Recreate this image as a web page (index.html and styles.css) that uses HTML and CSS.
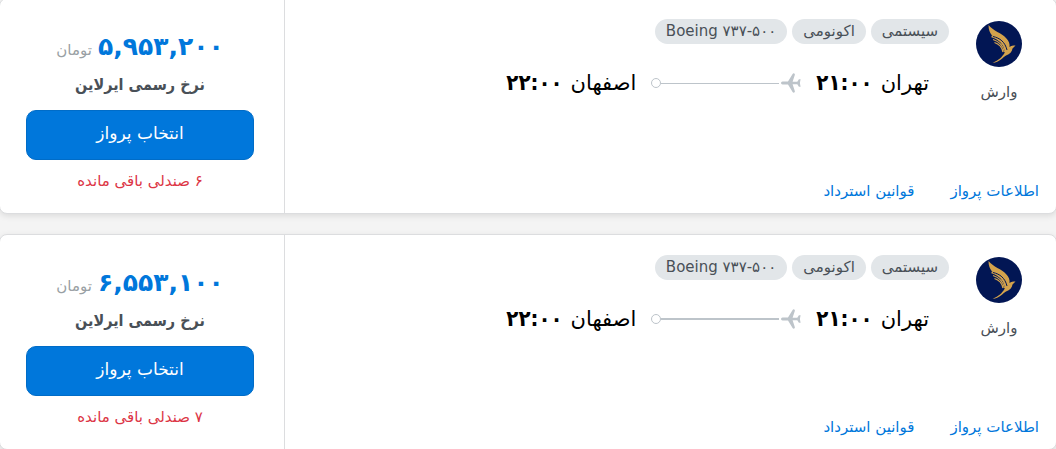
FILE: index.html
```html
<!DOCTYPE html>
<html lang="fa" dir="rtl">
<head>
    <meta charset="UTF-8">
    <meta name="viewport" content="width=device-width, initial-scale=1.0">
    <title>بلیط هواپیما تهران اصفهان</title>
    <link rel="stylesheet" href="styles.css">
</head>
<body>
    <!-- shared icons -->
    <svg class="sprite" aria-hidden="true">
        <symbol id="varesh" viewBox="0 0 46 46">
            <circle cx="23" cy="23" r="23" fill="#021654"/>
            <path fill="#d3a24c" d="M12.500 4C17 10 26 12 30 17C33 20 34 23 33.500 26C35 24.500 37 24.500 39.500 24.500L36.500 27.500C36 31 34 33 30 34.500C26 37 24 41 16.500 42C23 39 26 36 28.500 32C30 28 27 23 23 20C18 17 12.500 13 12.500 4Z"/>
            <g fill="none" stroke="#d3a24c" stroke-width="1.300">
                <path d="M15.500 15.500C22 17 28 22 29.500 30"/>
                <path d="M17 18.500C22 20 27 24 28.500 31"/>
                <path d="M18.500 21.500C23 23 26 26 27 31"/>
            </g>
            <path fill="none" stroke="#021654" d="M17 15.500C24 17 29 21 31 29"/>
        </symbol>
        <symbol id="plane" viewBox="0 0 20 20">
            <path fill="#bdc4ca" d="M1.500 8.600H7L11.600 1Q12.200 0 13.200 0.400Q14.200 0.800 13.800 2L11.600 8.700H16.300L17.900 6.200H19.600L19 9.200V10.800L19.600 13.800H17.900L16.300 11.300H11.600L13.800 18Q14.200 19.200 13.200 19.600Q12.200 20 11.600 19L7 11.400H1.500Q0 11.300 0 10Q0 8.700 1.500 8.600Z"/>
        </symbol>
    </svg>

    <main class="flights">
        <article class="card">
            <section class="details">
                <div class="info">
                    <div class="airline">
                        <svg class="logo" aria-hidden="true"><use href="#varesh"/></svg>
                        <span class="airline-name">وارش</span>
                    </div>
                    <div class="trip">
                        <div class="tags">
                            <span class="tag">سیستمی</span>
                            <span class="tag">اکونومی</span>
                            <span class="tag" dir="ltr">Boeing ۷۳۷-۵۰۰</span>
                        </div>
                        <div class="route">
                            <div class="stop"><span class="city">تهران</span><b class="time">۲۱:۰۰</b></div>
                            <div class="path">
                                <svg class="plane" aria-hidden="true"><use href="#plane"/></svg>
                                <span class="line"></span>
                                <span class="dot"></span>
                            </div>
                            <div class="stop"><span class="city">اصفهان</span><b class="time">۲۲:۰۰</b></div>
                        </div>
                    </div>
                </div>
                <nav class="links">
                    <a href="#info">اطلاعات پرواز</a>
                    <a href="#refund">قوانین استرداد</a>
                </nav>
            </section>
            <section class="buy">
                <div class="price"><b class="amount">۵,۹۵۳,۲۰۰</b><span class="unit">تومان</span></div>
                <div class="rate">نرخ رسمی ایرلاین</div>
                <button type="button" class="select-btn">انتخاب پرواز</button>
                <div class="seats">۶ صندلی باقی مانده</div>
            </section>
        </article>

        <article class="card">
            <section class="details">
                <div class="info">
                    <div class="airline">
                        <svg class="logo" aria-hidden="true"><use href="#varesh"/></svg>
                        <span class="airline-name">وارش</span>
                    </div>
                    <div class="trip">
                        <div class="tags">
                            <span class="tag">سیستمی</span>
                            <span class="tag">اکونومی</span>
                            <span class="tag" dir="ltr">Boeing ۷۳۷-۵۰۰</span>
                        </div>
                        <div class="route">
                            <div class="stop"><span class="city">تهران</span><b class="time">۲۱:۰۰</b></div>
                            <div class="path">
                                <svg class="plane" aria-hidden="true"><use href="#plane"/></svg>
                                <span class="line thick"></span>
                                <span class="dot"></span>
                            </div>
                            <div class="stop"><span class="city">اصفهان</span><b class="time">۲۲:۰۰</b></div>
                        </div>
                    </div>
                </div>
                <nav class="links">
                    <a href="#info">اطلاعات پرواز</a>
                    <a href="#refund">قوانین استرداد</a>
                </nav>
            </section>
            <section class="buy">
                <div class="price"><b class="amount">۶,۵۵۳,۱۰۰</b><span class="unit">تومان</span></div>
                <div class="rate">نرخ رسمی ایرلاین</div>
                <button type="button" class="select-btn">انتخاب پرواز</button>
                <div class="seats">۷ صندلی باقی مانده</div>
            </section>
        </article>
    </main>
</body>
</html>
```
FILE: styles.css
```css
* {
    box-sizing: border-box;
}
body {
    margin: 0;
    background-color: #f4f4f4;
    color: #000;
    font-family: "DejaVu Sans", sans-serif;
    font-size: 15px;
    overflow: hidden;
}
.sprite {
    display: none;
}
.flights {
    display: flex;
    flex-direction: column;
    gap: 20px;
    margin: -2px -1px 0;
}
.card {
    display: flex;
    background-color: #fff;
    border: 1px solid #dcdddf;
    border-radius: 8px;
    box-shadow: 0 2px 6px rgba(0, 0, 0, 0.1);
}
.details {
    flex: 1;
    display: flex;
    flex-direction: column;
    justify-content: space-between;
    padding: 20px 17px 10px;
}
.info {
    display: flex;
    gap: 10px;
}
.airline {
    width: 80px;
    display: flex;
    flex-direction: column;
    align-items: center;
    gap: 13px;
    padding-top: 2px;
    color: #495057;
}
.logo {
    width: 46px;
    height: 46px;
}
.airline-name {
    line-height: 24px;
}
.tags {
    display: flex;
    gap: 5px;
}
.tag {
    padding: 0 11px;
    border-radius: 13px;
    background-color: #e2e6e9;
    color: #495057;
    line-height: 25px;
    white-space: nowrap;
}
.route {
    display: flex;
    align-items: center;
    gap: 15px;
    margin-top: 23px;
    padding-right: 20px;
}
.stop {
    display: flex;
    align-items: center;
    gap: 8px;
    line-height: 32px;
}
.city {
    font-size: 21px;
}
.time {
    font-family: "DejaVu Sans Condensed", "DejaVu Sans", sans-serif;
    font-size: 22px;
}
.path {
    display: flex;
    align-items: center;
    width: 150px;
}
.plane {
    width: 20px;
    height: 20px;
    margin-left: 2px;
}
.line {
    flex: 1;
    height: 1px;
    background-color: #bdc4ca;
}
.thick {
    height: 2px;
}
.dot {
    width: 10px;
    height: 10px;
    border: 1px solid #bdc4ca;
    border-radius: 50%;
}
.links {
    display: flex;
    gap: 36px;
    line-height: 24px;
}
.links a {
    color: #0077db;
    text-decoration: none;
}
.buy {
    width: 285px;
    padding: 30px 30px 20px 26px;
    border-right: 1px solid #dcdddf;
    text-align: center;
}
.price {
    display: flex;
    align-items: baseline;
    justify-content: center;
    gap: 6px;
    line-height: 36px;
}
.amount {
    color: #0077db;
    font-size: 25px;
}
.unit {
    color: #999fa4;
}
.rate {
    margin-bottom: 8px;
    color: #495057;
    font-family: "DejaVu Sans Condensed", "DejaVu Sans", sans-serif;
    font-size: 16px;
    font-weight: bold;
    line-height: 34px;
}
.select-btn {
    display: block;
    width: 100%;
    height: 50px;
    padding: 0 0 4px;
    border: 1px solid #006cc7;
    border-radius: 10px;
    background-color: #0077db;
    color: #fff;
    font-family: inherit;
    font-size: 17px;
    cursor: pointer;
}
.seats {
    margin-top: 9px;
    color: #dc3545;
    line-height: 24px;
}
```
